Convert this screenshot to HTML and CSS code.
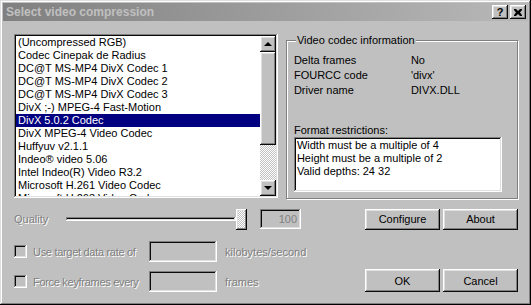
FILE: index.html
```html
<!DOCTYPE html>
<html lang="en">
<head>
  <meta charset="UTF-8" />
  <meta name="viewport" content="width=device-width, initial-scale=1.0"/>
  <title>Select video compression</title>
  <link rel="stylesheet" href="styles.css">
</head>
<body>
  <div class="window">
    <div class="titlebar">
      <span class="title">Select video compression</span>
      <div class="title-buttons">
        <div class="tbtn raised help">?</div>
        <div class="tbtn raised close">
          <svg width="8" height="7" viewBox="0 0 8 7"><path d="M0 0h2l2 2 2-2h2v1L6 3.5 8 6v1H6L4 5 2 7H0V6l2-2.5L0 1z" fill="#000"/></svg>
        </div>
      </div>
    </div>

    <div class="content">
      <div class="top-row">
        <div class="listbox sunken">
          <ul class="items">
            <li>(Uncompressed RGB)</li>
            <li>Codec Cinepak de Radius</li>
            <li>DC@T MS-MP4 DivX Codec 1</li>
            <li>DC@T MS-MP4 DivX Codec 2</li>
            <li>DC@T MS-MP4 DivX Codec 3</li>
            <li>DivX ;-) MPEG-4 Fast-Motion</li>
            <li class="selected">DivX 5.0.2 Codec</li>
            <li>DivX MPEG-4 Video Codec</li>
            <li>Huffyuv v2.1.1</li>
            <li>Indeo® video 5.06</li>
            <li>Intel Indeo(R) Video R3.2</li>
            <li>Microsoft H.261 Video Codec</li>
            <li>Microsoft H.263 Video Codec</li>
          </ul>
          <div class="scrollbar">
            <div class="sbtn raised"><span class="arrow up"></span></div>
            <div class="thumb raised"></div>
            <div class="track"></div>
            <div class="sbtn raised"><span class="arrow down"></span></div>
          </div>
        </div>

        <div class="group">
          <div class="group-title">Video codec information</div>
          <div class="info-row"><span class="info-label">Delta frames</span><span>No</span></div>
          <div class="info-row"><span class="info-label">FOURCC code</span><span>'divx'</span></div>
          <div class="info-row"><span class="info-label">Driver name</span><span>DIVX.DLL</span></div>
          <div class="restrict-label">Format restrictions:</div>
          <div class="restrict-box sunken">
            <div>Width must be a multiple of 4</div>
            <div>Height must be a multiple of 2</div>
            <div>Valid depths: 24 32</div>
          </div>
        </div>
      </div>

      <div class="quality-row">
        <span class="disabled quality-label">Quality</span>
        <div class="slider">
          <div class="slider-track"></div>
          <div class="slider-thumb"></div>
        </div>
        <div class="edit sunken quality-edit">100</div>
        <div class="actions">
          <div class="btn raised">Configure</div>
          <div class="btn raised">About</div>
        </div>
      </div>

      <div class="bottom">
        <div class="options">
          <div class="option">
            <span class="check sunken"></span>
            <span class="disabled option-label">Use target data rate of</span>
            <div class="edit sunken option-edit"></div>
            <span class="disabled unit">kilobytes/second</span>
          </div>
          <div class="option">
            <span class="check sunken"></span>
            <span class="disabled option-label">Force keyframes every</span>
            <div class="edit sunken option-edit"></div>
            <span class="disabled unit">frames</span>
          </div>
        </div>
        <div class="actions">
          <div class="btn raised tall">OK</div>
          <div class="btn raised tall">Cancel</div>
        </div>
      </div>
    </div>
  </div>
</body>
</html>
```

FILE: styles.css
```css
body {
  margin: 0;
  font-family: 'Liberation Sans', Arial, sans-serif;
  font-size: 11px;
  color: #000;
  background: #c0c0c0;
}
.window {
  width: 531px;
  height: 305px;
  box-sizing: border-box;
  padding: 3px;
  background: #c0c0c0;
  box-shadow: inset -1px -1px #000, inset 1px 1px #dfdfdf, inset -2px -2px #808080, inset 2px 2px #fff;
}
.raised {
  background: #c0c0c0;
  box-shadow: inset -1px -1px #0a0a0a, inset 1px 1px #fff, inset -2px -2px #808080, inset 2px 2px #dfdfdf;
}
.sunken {
  box-shadow: inset -1px -1px #fff, inset 1px 1px #808080, inset -2px -2px #dfdfdf, inset 2px 2px #0a0a0a;
}
.disabled {
  color: #808080;
  text-shadow: 1px 1px 0 #fff;
}

/* Title bar */
.titlebar {
  height: 18px;
  display: flex;
  align-items: center;
  justify-content: space-between;
  padding: 0 2px 0 3px;
  background: linear-gradient(90deg, #808080, #b8b8b8);
}
.title {
  font-weight: bold;
  font-size: 12px;
  color: #c0c0c0;
}
.title-buttons {
  display: flex;
  gap: 2px;
}
.tbtn {
  width: 16px;
  height: 14px;
  display: flex;
  align-items: center;
  justify-content: center;
  font-weight: bold;
  font-size: 11px;
  line-height: 14px;
}

/* Content */
.content {
  padding: 13px 10px 0 11px;
}
.top-row {
  display: flex;
  align-items: flex-start;
}

/* List */
.listbox {
  width: 271px;
  height: 164px;
  box-sizing: border-box;
  padding: 2px;
  display: flex;
  background: #fff;
}
.items {
  flex: 1;
  margin: 0;
  padding: 0;
  list-style: none;
  overflow: hidden;
}
.items li {
  height: 13px;
  line-height: 13px;
  padding-left: 2px;
  white-space: nowrap;
}
.items li.selected {
  background: #000080;
  color: #fff;
}
.scrollbar {
  width: 16px;
  display: flex;
  flex-direction: column;
}
.sbtn {
  height: 16px;
  display: flex;
  align-items: center;
  justify-content: center;
}
.arrow {
  width: 0;
  height: 0;
  border-left: 4px solid transparent;
  border-right: 4px solid transparent;
}
.arrow.up {
  border-bottom: 4px solid #000;
}
.arrow.down {
  border-top: 4px solid #000;
}
.thumb {
  height: 93px;
}
.track {
  flex: 1;
  background: repeating-conic-gradient(#fff 0 25%, #c0c0c0 0 50%) 0 0 / 2px 2px;
}

/* Group box */
.group {
  width: 222px;
  height: 157px;
  margin: 6px 0 0 8px;
  padding: 0 7px;
  border: 1px solid #808080;
  box-shadow: inset 1px 1px #fff, 1px 1px #fff;
}
.group-title {
  width: max-content;
  margin: -7px 0 0 2px;
  padding: 0 1px;
  line-height: 13px;
  background: #c0c0c0;
}
.info-row {
  display: flex;
  line-height: 15px;
}
.group-title + .info-row {
  margin-top: 6px;
}
.info-label {
  width: 117px;
}
.restrict-label {
  margin-top: 26px;
  line-height: 13px;
}
.restrict-box {
  width: 208px;
  height: 55px;
  box-sizing: border-box;
  padding: 2px 3px;
  background: #fff;
  line-height: 13px;
}

/* Quality row */
.quality-row {
  display: flex;
  align-items: center;
  height: 22px;
  margin-top: 9px;
}
.quality-label {
  width: 52px;
}
.slider {
  width: 183px;
  height: 21px;
  display: flex;
  align-items: center;
}
.slider-track {
  flex: 1;
  height: 4px;
  box-shadow: inset -1px -1px #fff, inset 1px 1px #808080, inset -2px -2px #dfdfdf, inset 2px 2px #0a0a0a;
}
.slider-thumb {
  width: 11px;
  height: 21px;
  margin-right: 2px;
  box-shadow: inset -1px -1px #0a0a0a, inset 1px 1px #fff, inset -2px -2px #808080, inset 2px 2px #dfdfdf;
  background: repeating-conic-gradient(#fff 0 25%, #c0c0c0 0 50%) 0 0 / 2px 2px;
}
.edit {
  height: 20px;
  box-sizing: border-box;
  background: #c0c0c0;
}
.quality-edit {
  width: 41px;
  margin-left: 11px;
  padding: 0 4px;
  line-height: 20px;
  text-align: right;
  color: #808080;
}
.actions {
  display: flex;
  gap: 3px;
  margin-left: auto;
}
.btn {
  width: 75px;
  height: 21px;
  display: flex;
  align-items: center;
  justify-content: center;
}
.btn.tall {
  height: 23px;
}

/* Options */
.bottom {
  display: flex;
  align-items: flex-end;
  margin-top: 11px;
}
.options {
  display: flex;
  flex-direction: column;
  gap: 9px;
}
.option {
  display: flex;
  align-items: center;
  height: 21px;
}
.check {
  width: 13px;
  height: 13px;
  margin-right: 6px;
  background: #c0c0c0;
}
.option-label {
  width: 116px;
  letter-spacing: -0.3px;
}
.option-edit {
  width: 68px;
  height: 21px;
  margin-right: 8px;
}
```
